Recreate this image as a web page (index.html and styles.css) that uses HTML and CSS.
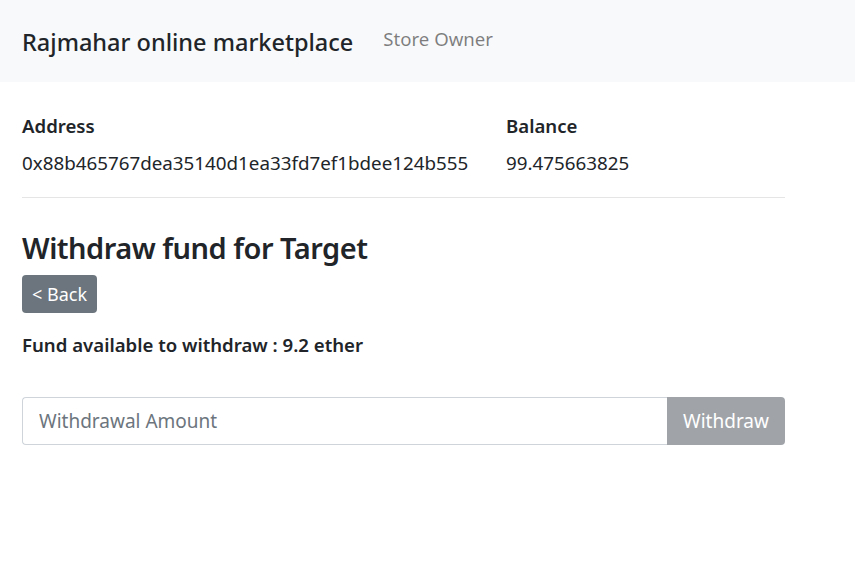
FILE: index.html
```html
<!DOCTYPE html>
<html>
<head>
<meta charset="utf-8">
<link rel="stylesheet" href="styles.css">
</head>
<body>
<nav class="navbar">
  <span class="brand">Rajmahar online marketplace</span>
  <span class="role">Store Owner</span>
</nav>
<main class="content">
  <div class="account">
    <div class="col">
      <div class="label">Address</div>
      <div class="value">0x88b465767dea35140d1ea33fd7ef1bdee124b555</div>
    </div>
    <div class="col">
      <div class="label">Balance</div>
      <div class="value">99.475663825</div>
    </div>
  </div>
  <hr class="divider">
  <h3 class="title">Withdraw fund for Target</h3>
  <button class="btn-back">&lt; Back</button>
  <p class="fund">Fund available to withdraw : 9.2 ether</p>
  <div class="input-group">
    <input class="amount" type="text" placeholder="Withdrawal Amount">
    <button class="btn-withdraw">Withdraw</button>
  </div>
</main>
</body>
</html>
```
FILE: styles.css
```css
* { box-sizing: border-box; }
html, body { margin: 0; padding: 0; background: #fff; }
body {
  font-family: "Noto Sans", "Open Sans", sans-serif;
  color: #212529;
  font-size: 18.6px;
}
.navbar {
  height: 82px;
  background: #f8f9fa;
  display: flex;
  align-items: center;
  padding: 0 22px;
}
.brand {
  font-size: 23.5px;
  font-weight: 500;
  color: #212529;
  margin-top: 2px;
}
.role {
  font-size: 18.6px;
  color: rgba(0,0,0,.5);
  margin-left: 30px;
  margin-top: -6px;
}
.content {
  width: 807px;
  padding: 0 22px;
}
.account {
  display: grid;
  grid-template-columns: 484px 1fr;
  margin-top: 30px;
}
.label {
  font-weight: 600;
  line-height: 28px;
}
.value {
  font-size: 18.8px;
  line-height: 28px;
  margin-top: 9px;
}
.divider {
  border: 0;
  border-top: 1px solid rgba(0,0,0,.1);
  margin: 20px 0 0;
}
.title {
  font-size: 29px;
  font-weight: 600;
  letter-spacing: -0.5px;
  margin: 30px 0 0;
  line-height: 40px;
}
.btn-back {
  display: block;
  margin-top: 7px;
  height: 38px;
  width: 75px;
  border: 0;
  border-radius: 4px;
  background: #6c757d;
  color: #fff;
  font-family: inherit;
  font-size: 18px;
  padding: 0;
}
.fund {
  font-weight: 600;
  margin: 18px 0 0;
  line-height: 28px;
}
.input-group {
  display: flex;
  margin-top: 38px;
  height: 48px;
}
.amount {
  flex: 1;
  border: 1px solid #ced4da;
  border-right: 0;
  border-radius: 4px 0 0 4px;
  padding: 0 16px;
  font-family: inherit;
  font-size: 19px;
  color: #495057;
  outline: none;
}
.amount::placeholder { color: #6c757d; }
.btn-withdraw {
  width: 118px;
  border: 0;
  border-radius: 0 4px 4px 0;
  background: #a0a4a9;
  color: #fff;
  font-family: inherit;
  font-size: 19px;
  padding: 0;
}
```
